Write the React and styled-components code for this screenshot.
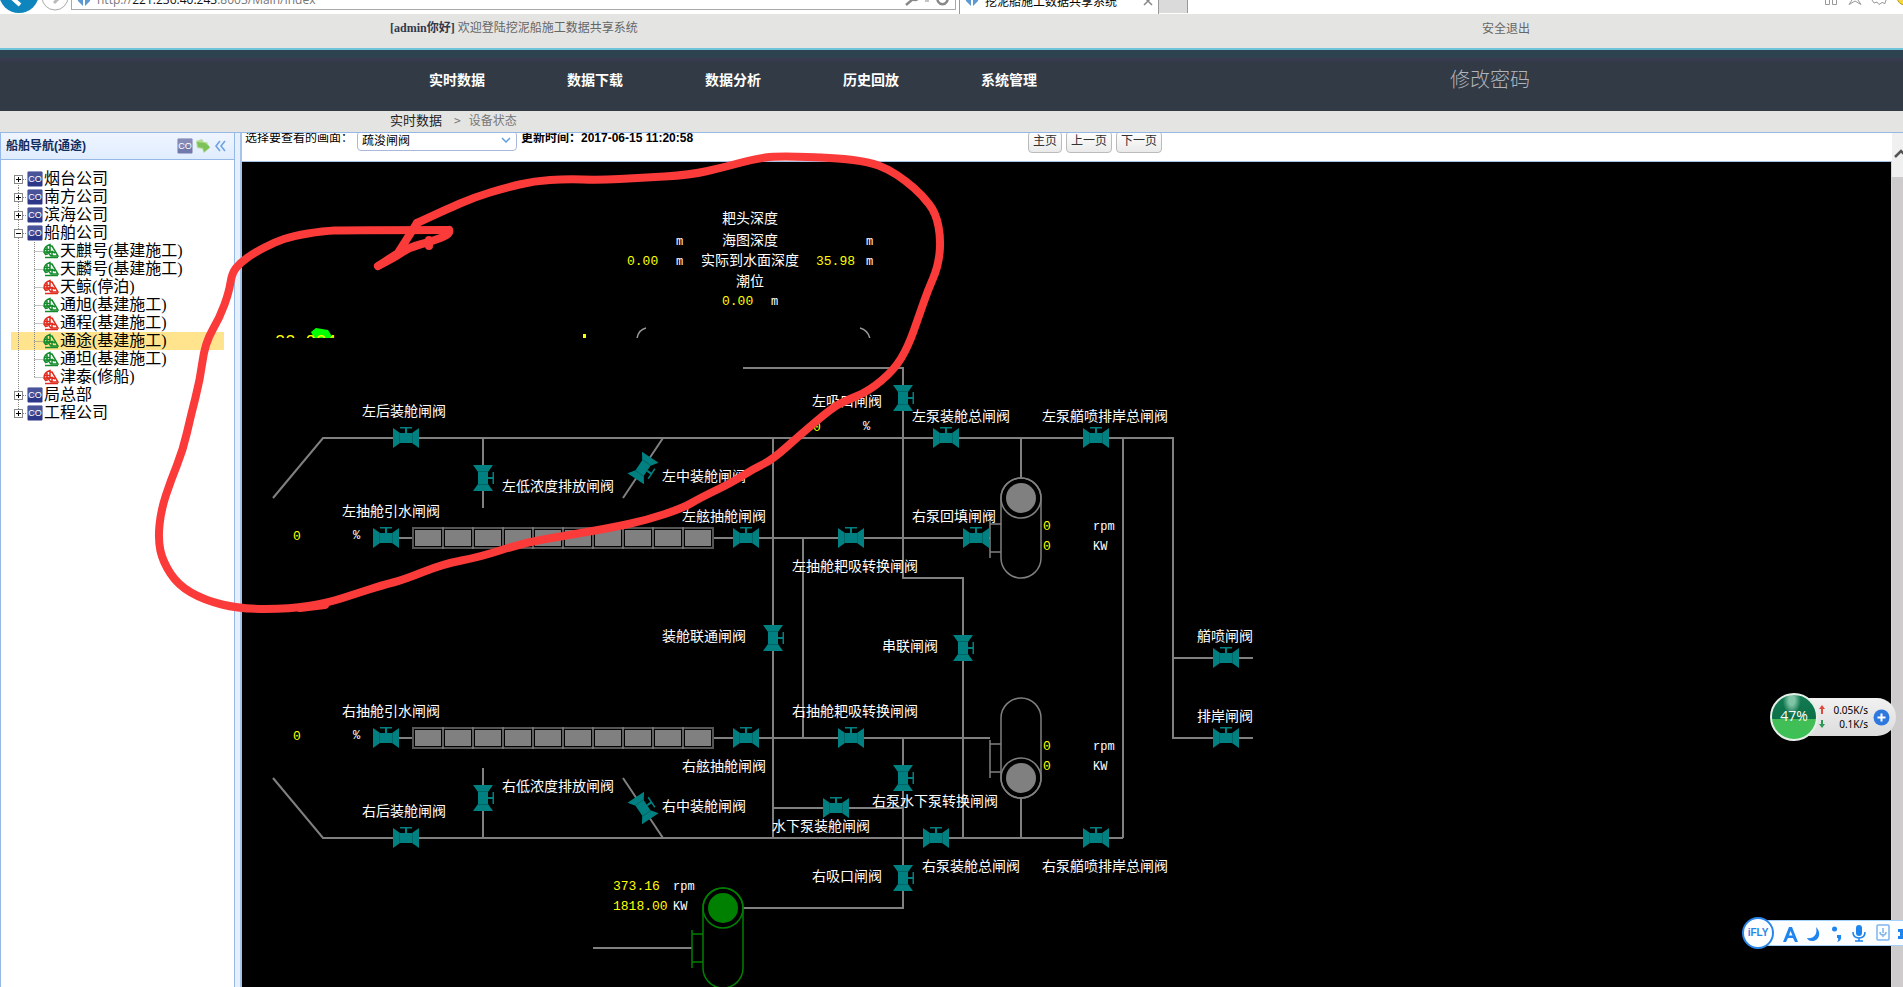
import React from "react";
import styled, { createGlobalStyle } from "styled-components";

const cjk = '"Noto Sans CJK SC", sans-serif';
const LINE = "#808080";

const GlobalStyle = createGlobalStyle`
  * { box-sizing: border-box; }
  html, body, #root { height: 100%; }
  body { margin: 0; background: #fff; overflow: hidden; font: 12px/16px "Liberation Sans", ${cjk}; color: #000; }
  a { color: inherit; text-decoration: none; }
  button, select { font: inherit; color: inherit; }
  ul { list-style: none; margin: 0; padding: 0; }
  svg { display: block; }
`;

const Page = styled.div`
  position: relative;
  height: 100vh;
  display: flex;
  flex-direction: column;
  overflow: hidden;
`;

/* ---------- browser strip ---------- */
const BrowserStrip = styled.div`
  flex: none;
  height: 14px;
  overflow: hidden;
  display: flex;
  align-items: flex-end;
  background: #fff;
`;
const StripIcon = styled.svg`
  flex: none;
`;
const Address = styled.div`
  flex: none;
  width: 46.5%;
  height: 30px;
  margin-bottom: 4px;
  border: 1px solid #a8a8a8;
  display: flex;
  align-items: flex-end;
  gap: 6px;
  padding: 0 2px 0 5px;
  font: 12px/18px "Open Sans", sans-serif;
  color: #777;
  b { font-weight: 400; color: #111; }
  span { flex: 1; }
`;
const Tab = styled.div`
  flex: none;
  width: 200px;
  height: 30px;
  margin-left: 3px;
  border-left: 1px solid #999;
  border-right: 1px solid #999;
  display: flex;
  align-items: flex-end;
  gap: 6px;
  padding: 0 4px 5px 5px;
  font-family: ${cjk};
  span { flex: 1; }
`;
const NewTab = styled.div`
  width: 29px;
  height: 30px;
  margin-bottom: 1px;
  background: #dadada;
  border-right: 1px solid #999;
`;
const StripTools = styled.div`
  margin-left: auto;
`;

/* ---------- site header ---------- */
const Band = styled.div`
  flex: none;
  padding-left: 17px;
  background: #e4e4e2;
`;
const Inner = styled.div`
  max-width: 1140px;
  height: ${(p) => p.$h}px;
  padding-bottom: ${(p) => p.$lift}px;
  margin: 0 auto;
  display: flex;
  align-items: center;
`;
const Welcome = styled.div`
  flex: 1;
  font: 12px/16px "Liberation Serif", ${cjk};
  color: #666;
  b { color: #32384a; }
`;
const QuietLink = styled.a`
  font-family: ${cjk};
  color: #666;
`;
const NavBand = styled(Band)`
  background: linear-gradient(#2e4350 0 7px, #3a3a50 9px, #323a46 13px);
  border-top: 2px solid #6fc4da;
  margin-top: -1px;
`;
const Nav = styled.nav`
  flex: 1;
  display: flex;
  padding-left: 39px;
`;
const NavLink = styled.a`
  width: 138px;
  font: 700 14px/20px ${cjk};
  color: #fff;
`;
const PasswordLink = styled.a`
  font: 300 20px/28px ${cjk};
  color: #b0b4bb;
`;
const Crumbs = styled.nav`
  display: flex;
  gap: 12px;
  font-family: ${cjk};
  color: #777;
  a { font-size: 13px; color: #222; }
  span { display: flex; gap: 8px; }
`;

/* ---------- body layout ---------- */
const Body = styled.div`
  flex: 1;
  min-height: 0;
  display: flex;
  border-top: 1px solid #95b8e7;
`;
const Sidebar = styled.aside`
  flex: none;
  width: 235px;
  border: solid #95b8e7;
  border-width: 0 1px;
`;
const SideHeader = styled.header`
  height: 27px;
  display: flex;
  align-items: center;
  gap: 2px;
  padding: 0 5px;
  background: linear-gradient(#eff5ff, #e0ecff);
  border-bottom: 1px solid #95b8e7;
  h2 { flex: 1; margin: 0; font: 700 12px/16px "Liberation Sans", ${cjk}; color: #0e2d5f; }
`;
const ToolButton = styled.button`
  width: 16px;
  height: 16px;
  padding: 0;
  border: 0;
  background: none;
`;
const Tree = styled.div`
  padding: 10px;
`;
const TreeRow = styled.a`
  height: 18px;
  display: flex;
  align-items: center;
  background: ${(p) => (p.$on ? "#ffe48d" : "none")};
  font: 16px/18px "Liberation Serif", ${cjk};
  color: #000;
  white-space: nowrap;
  svg { flex: none; }
  span { padding-left: 1px; }
`;
const Splitter = styled.div`
  flex: none;
  width: 5px;
  background: #e6effc;
`;
const Main = styled.main`
  flex: 1;
  min-width: 0;
  display: flex;
  flex-direction: column;
  border-left: 2px solid #a9c2e8;
`;
const Toolbar = styled.div`
  flex: none;
  height: 28px;
  overflow: hidden;
  display: flex;
  align-items: flex-start;
  padding-left: 3px;
  label, time, select, button { margin-top: -2px; }
  label { line-height: 14px; width: 112px; }
  time { font-weight: 700; line-height: 14px; margin-left: 4px; width: 507px; white-space: nowrap; }
`;
const Picker = styled.span`
  position: relative;
  display: flex;
  select {
    appearance: none;
    width: 160px;
    height: 20px;
    padding: 0 20px 0 4px;
    border: 1px solid #a9b8dc;
    border-radius: 4px;
    background: #fff;
  }
  svg { position: absolute; right: 6px; top: 3px; }
`;
const PageButton = styled.button`
  height: 22px;
  padding: 0 4px 2px;
  margin-right: 4px;
  line-height: 16px;
  border: 1px solid #bbb;
  border-radius: 4px;
  background: linear-gradient(#fff, #eaeaea);
  color: #333;
`;
const Canvas = styled.div`
  flex: 1;
  min-height: 0;
  overflow: hidden;
  background: #000;
  border-top: 1px solid #a9c2e8;
  border-right: 1px solid #c6d8f5;
`;
const Scrollbar = styled.div`
  flex: none;
  width: 11px;
  background: #cdcbcc;
  svg { background: #f0f0f1; }
`;
const Label = styled.text`
  font: 14px ${cjk};
  fill: #fff;
`;
const Reading = styled.text`
  font: 13px "Liberation Mono", monospace;
  fill: #ff0;
`;
const Unit = styled.text`
  font: 12px "Liberation Mono", monospace;
  fill: #fff;
`;

/* ---------- floating pieces ---------- */
const Markup = styled.svg`
  position: absolute;
  left: 0;
  top: 0;
  pointer-events: none;
`;
const NetMonitor = styled.div`
  position: absolute;
  right: 7px;
  bottom: 246px;
  display: flex;
  align-items: center;
`;
const Percent = styled.div`
  position: relative;
  z-index: 1;
  width: 48px;
  height: 48px;
  margin-right: -24px;
  border: 2px solid #e4f0e8;
  border-radius: 50%;
  background: radial-gradient(ellipse at 45% 12%, #7fc4a5 0 3px, transparent 9px), linear-gradient(#117a52 0, #0d7048 54%, #43bd57 54%, #3cc155);
  font: 14px/42px "Open Sans", sans-serif;
  color: #fff;
  text-align: center;
`;
const Speeds = styled.div`
  width: 102px;
  height: 38px;
  display: grid;
  grid-template-columns: 10px 36px 17px;
  grid-auto-rows: 14px;
  align-content: center;
  align-items: center;
  justify-content: end;
  column-gap: 5px;
  padding-right: 6px;
  border-radius: 0 19px 19px 0;
  background: linear-gradient(#f1f1f1, #dcdcdc);
  font: 10px/14px "Noto Sans", sans-serif;
  text-align: right;
  white-space: nowrap;
  span { justify-self: end; }
  button { grid-column: 3; grid-row: 1 / 3; width: 17px; height: 17px; padding: 0; border: 0; background: none; }
`;
const InputBar = styled.div`
  position: absolute;
  right: 0;
  bottom: 41px;
  width: 146px;
  height: 26px;
  display: flex;
  align-items: center;
  background: #fdfeff;
  border: solid #a5d2f8;
  border-width: 1px 0;
  svg { flex: none; margin-left: -15px; }
`;

const CoIcon = ({ faded }) => (
  <svg width="16" height="16" viewBox="0 0 16 16">
    <rect x="0.5" y="0.5" width="15" height="15" rx="1" fill={faded ? "#7278ab" : "#2c3789"} />
    <path d="M1 1h14v6L1 11z" fill="#fff" opacity="0.14" />
    <text x="8" y="11" fontSize="9" fontFamily="Liberation Sans, sans-serif" fill="#fff" textAnchor="middle">CO</text>
  </svg>
);

const ShipIcon = ({ color }) => (
  <svg width="16" height="16" viewBox="0 0 16 16" fill="none" stroke={color} strokeWidth="1.5">
    <path d="M1 9C1 5 3 2.500 7 1.500V9zM1 6.500h6M4 3v9M1 9l2 3" />
    <path d="M7 3l2 0 6 10H8L5 9.500l4-1v4M9 8.500l3 1.500" />
    <path d="M2 14.500h13" strokeWidth="1.500" />
  </svg>
);

const Branch = ({ kind, first, last }) => (
  <svg width="16" height="18" viewBox="0 0 16 18" fill="none">
    {kind === "elbow" && <path d={`M7.5 0v${last ? 9 : 18}M7.5 9.500H16`} stroke="#888" strokeDasharray="1 1" />}
    {kind === "pipe" && <path d="M7.500 0v18" stroke="#888" strokeDasharray="1 1" />}
    {(kind === "plus" || kind === "minus") && (
      <>
        <path d={`M7.5 ${first ? 9 : 0}V${last ? 9 : 18}M12 9.500h4`} stroke="#888" strokeDasharray="1 1" />
        <rect x="3.500" y="5.500" width="8" height="8" fill="#fff" stroke="#888" />
        <path d={kind === "plus" ? "M5 9.500h5M7.500 7v5" : "M5 9.500h5"} stroke="#000" />
      </>
    )}
  </svg>
);

const Favicon = () => (
  <svg width="14" height="20" viewBox="0 0 14 20" fill="#3f86c9">
    <path d="M6 4v13L1 12C0 9 2 6 6 4zM8 4v13l5-5c1-3-1-6-5-8z" opacity="0.850" />
  </svg>
);

const companies = [
  { name: "烟台公司" },
  { name: "南方公司" },
  { name: "滨海公司" },
  {
    name: "船舶公司",
    ships: [
      ["天麒号(基建施工)", true],
      ["天麟号(基建施工)", true],
      ["天鲸(停泊)", false],
      ["通旭(基建施工)", true],
      ["通程(基建施工)", false],
      ["通途(基建施工)", true],
      ["通坦(基建施工)", true],
      ["津泰(修船)", false],
    ],
  },
  { name: "局总部" },
  { name: "工程公司" },
];

const ShipTree = () => (
  <Tree>
    <ul>
      {companies.map((c, i) => (
        <li key={c.name}>
          <TreeRow href="#">
            <Branch kind={c.ships ? "minus" : "plus"} first={i === 0} last={i === companies.length - 1} />
            <CoIcon />
            <span>{c.name}</span>
          </TreeRow>
          {c.ships && (
            <ul>
              {c.ships.map(([name, working], j) => (
                <li key={name}>
                  <TreeRow href="#" $on={name.startsWith("通途")}>
                    <Branch kind="pipe" />
                    <Branch kind="elbow" last={j === c.ships.length - 1} />
                    <ShipIcon color={working ? "#138a2b" : "#e02a1c"} />
                    <span>{name}</span>
                  </TreeRow>
                </li>
              ))}
            </ul>
          )}
        </li>
      ))}
    </ul>
  </Tree>
);

/* ---------- piping diagram ---------- */
const pipes = [
  "M31 336L81 276H931V576H1011", "M931 496H1011",
  "M241 276V346", "M421 276L381 336", "M531 276V676",
  "M501 206H661V416H721V676", "M471 376H748", "M561 376V576",
  "M779 276V316", "M881 276V676", "M471 576H748",
  "M661 576V746H501", "M531 646H661",
  "M31 616L81 676H881", "M241 606V676", "M381 616L421 676",
  "M779 636V676", "M351 786H450", "M155 376H171", "M155 576H171",
];

const valves = [
  [164, 276], [144, 376], [504, 376], [609, 376], [734, 376], [704, 276], [854, 276],
  [144, 576], [504, 576], [609, 576], [594, 646], [694, 676], [854, 676], [164, 676],
  [984, 496], [984, 576],
  [241, 316, 90], [661, 236, 90], [241, 636, 90], [531, 476, 90], [721, 486, 90],
  [661, 616, 90], [661, 716, 90], [401, 306, 124], [401, 646, 56],
];

const Valve = ({ x, y, turn = 0 }) => (
  <g transform={`translate(${x} ${y}) rotate(${turn})`} fill="#008080">
    <path d="M-13-10L-6-5H6L13-10V10L6 5H-6L-13 10z" />
    <path d="M-6-11H6V-9.500H1V-5H-1V-9.500H-6z" />
    <path d="M-6.500-5V5M6.500-5V5" stroke="#005c5c" strokeWidth="0.700" />
  </g>
);

const Tank = ({ y }) => (
  <g>
    <rect x="171" y={y} width="300" height="20" fill="#000" stroke="#555" strokeWidth="2" />
    {Array.from({ length: 10 }, (_, i) => (
      <g key={i}>
        <rect x={173 + i * 30} y={y + 2} width="26" height="16" fill={LINE} />
        {i > 0 && <path d={`M${171 + i * 30} ${y - 1}v22`} stroke={LINE} strokeWidth="1.500" />}
      </g>
    ))}
  </g>
);

const Pump = ({ x, top, head, color = LINE }) => (
  <g fill="none" stroke={color} strokeWidth="1.500">
    <rect x={x - 20} y={top} width="40" height="100" rx="20" />
    <circle cx={x} cy={head} r="20" />
    <circle cx={x} cy={head} r="15" fill={color} stroke="none" />
    <path d={`M${x - 31} ${top + 42}v38M${x - 31} ${top + 46}h11M${x - 31} ${top + 74}h11`} />
  </g>
);

const labels = [
  [480, 61, "耙头深度"], [480, 83, "海图深度"], [459, 103, "实际到水面深度"], [494, 124, "潮位"],
  [120, 254, "左后装舱闸阀"], [260, 329, "左低浓度排放闸阀"], [420, 319, "左中装舱闸阀"],
  [100, 354, "左抽舱引水闸阀"], [440, 359, "左舷抽舱闸阀"], [570, 244, "左吸口闸阀"],
  [670, 259, "左泵装舱总闸阀"], [800, 259, "左泵艏喷排岸总闸阀"], [670, 359, "右泵回填闸阀"],
  [550, 409, "左抽舱耙吸转换闸阀"], [420, 479, "装舱联通闸阀"], [640, 489, "串联闸阀"],
  [955, 479, "艏喷闸阀"], [955, 559, "排岸闸阀"], [100, 554, "右抽舱引水闸阀"],
  [550, 554, "右抽舱耙吸转换闸阀"], [260, 629, "右低浓度排放闸阀"], [120, 654, "右后装舱闸阀"],
  [420, 649, "右中装舱闸阀"], [440, 609, "右舷抽舱闸阀"], [630, 644, "右泵水下泵转换闸阀"],
  [530, 669, "水下泵装舱闸阀"], [680, 709, "右泵装舱总闸阀"], [800, 709, "右泵艏喷排岸总闸阀"],
  [570, 719, "右吸口闸阀"],
];
const readings = [
  [385, 103, "0.00"], [574, 103, "35.98"], [480, 143, "0.00"], [51, 378, "0"], [51, 578, "0"],
  [571, 269, "0"], [801, 368, "0"], [801, 388, "0"], [801, 588, "0"], [801, 608, "0"],
  [371, 728, "373.16"], [371, 748, "1818.00"],
];
const units = [
  [434, 83, "m"], [434, 103, "m"], [624, 83, "m"], [624, 103, "m"], [529, 143, "m"],
  [111, 377, "%"], [111, 577, "%"], [621, 268, "%"],
  [851, 368, "rpm"], [851, 388, "KW"], [851, 588, "rpm"], [851, 608, "KW"],
  [431, 728, "rpm"], [431, 748, "KW"],
];

const Diagram = () => (
  <svg width="100%" height="100%" role="img" aria-label="疏浚闸阀">
    <clipPath id="gauge-clip">
      <rect x="0" y="160" width="660" height="16" />
    </clipPath>
    <path d={pipes.join("")} fill="none" stroke={LINE} strokeWidth="2" />
    <g clipPath="url(#gauge-clip)">
      <path d="M69 170l5-4 12 2 5 8H72z" fill="#0f0" />
      <text x="33" y="184" fontSize="17" fontFamily="Liberation Mono, monospace" fill="#ff0">22.024</text>
      <rect x="341" y="172" width="3" height="4" fill="#ff0" />
      <path d="M395 177Q396 168 404 166M618 166Q626 168 628 177" fill="none" stroke="#999" strokeWidth="1.500" />
    </g>
    <Tank y={366} />
    <Tank y={566} />
    <Pump x={779} top={316} head={336} />
    <Pump x={779} top={536} head={616} />
    <Pump x={481} top={726} head={746} color="#008000" />
    {valves.map(([x, y, turn]) => <Valve key={`${x}-${y}`} x={x} y={y} turn={turn} />)}
    {labels.map(([x, y, t]) => <Label key={t} x={x} y={y}>{t}</Label>)}
    {readings.map(([x, y, t]) => <Reading key={`${x}-${y}`} x={x} y={y}>{t}</Reading>)}
    {units.map(([x, y, t]) => <Unit key={`${x}-${y}`} x={x} y={y}>{t}</Unit>)}
  </svg>
);

/* ---------- freehand marker ---------- */
const loop = [
  [378, 223], [413, 206], [440, 193], [480, 184], [534, 181], [566, 179], [600, 180], [639, 178], [690, 175], [725, 167],
  [754, 159], [777, 156], [837, 158], [869, 162], [888, 169], [906, 181], [922, 195], [936, 213], [941, 240],
  [938, 267], [928, 290], [920, 313], [908, 347], [894, 370], [869, 391], [845, 401], [832, 408], [800, 435],
  [772, 460], [753, 469], [733, 482], [700, 498], [683, 508], [647, 520], [610, 528], [563, 536], [523, 543],
  [480, 557], [443, 564], [403, 580], [383, 585], [355, 594], [327, 603], [290, 609], [240, 609], [204, 600],
  [178, 585], [163, 562], [158, 540], [161, 510], [171, 480], [183, 450], [191, 415], [200, 380], [205, 343],
  [220, 317], [229, 292], [232, 273], [240, 263], [254, 253], [275, 242], [293, 236], [323, 231], [346, 230],
  [449, 230],
];
const arrowHead = [[449, 230], [451, 234], [430, 242], [410, 247], [394, 258], [378, 266]];

const smooth = (pts) => {
  const mids = pts.slice(1, -1).map(([x, y], i) => {
    const [nx, ny] = pts[i + 2];
    const end = i === pts.length - 3;
    return `Q${x} ${y} ${end ? nx : (x + nx) / 2} ${end ? ny : (y + ny) / 2}`;
  });
  return `M${pts[0].join(" ")}${mids.join("")}`;
};

/* the loop starts over the canvas, a little right of the arrow's tip */
const loopStart = [[417, 223], [445, 210], [475, 197], [505, 188]];

export default function App() {
  return (
    <Page>
      <GlobalStyle />
      <BrowserStrip>
        <StripIcon width="71" height="30" viewBox="0 -16 71 30">
          <circle cx="19" cy="-7" r="20" fill="#0e86bd" />
          <path d="M20 5L10-4" stroke="#fff" strokeWidth="4" />
          <circle cx="55" cy="-3" r="13" fill="none" stroke="#aaa" />
          <path d="M54 3l7-7" stroke="#bbb" strokeWidth="3" />
        </StripIcon>
        <Address>
          <Favicon />
          <span>http://<b>221.236.40.243</b>:8003/Main/Index</span>
          <svg width="50" height="16" viewBox="0 0 50 16" fill="none" stroke="#888" strokeWidth="2.500">
            <path d="M3 12l7-6" />
            <circle cx="12" cy="3" r="4" />
            <path d="M22 8h4" strokeWidth="1" />
            <path d="M35 4a5 5 0 1 0 9 0" />
          </svg>
        </Address>
        <Tab>
          <Favicon />
          <span>挖泥船施工数据共享系统</span>
          <svg width="12" height="12" viewBox="0 0 12 12" stroke="#888" strokeWidth="1.500"><path d="M2 0l8 8M10 0l-8 8" /></svg>
        </Tab>
        <NewTab />
        <StripTools>
          <svg width="80" height="14" viewBox="0 0 80 14" fill="none" stroke="#999">
            <path d="M2.500 0v4.500h4V0M9.500 0v4.500h4V0" />
            <path d="M29 0l-3 4.500 6-3.500 6 3.500L35 0" />
            <path d="M49 0l2 3 3-1 2 2.500 3-2 3 1 1-3.500" />
            <circle cx="82" cy="-3" r="8" fill="#f6d73c" stroke="#b99b18" />
          </svg>
        </StripTools>
      </BrowserStrip>

      <Band>
        <Inner $h={35} $lift={8}>
          <Welcome><b>[admin你好]</b> 欢迎登陆挖泥船施工数据共享系统</Welcome>
          <QuietLink href="#">安全退出</QuietLink>
        </Inner>
      </Band>
      <NavBand>
        <Inner $h={61} $lift={4}>
          <Nav>
            {["实时数据", "数据下载", "数据分析", "历史回放", "系统管理"].map((t) => (
              <NavLink key={t} href="#">{t}</NavLink>
            ))}
          </Nav>
          <PasswordLink href="#">修改密码</PasswordLink>
        </Inner>
      </NavBand>
      <Band>
        <Inner $h={21} $lift={4}>
          <Crumbs>
            <a href="#">实时数据</a>
            <span><span>&gt;</span> 设备状态</span>
          </Crumbs>
        </Inner>
      </Band>

      <Body>
        <Sidebar>
          <SideHeader>
            <h2>船舶导航(通途)</h2>
            <ToolButton aria-label="公司"><CoIcon faded /></ToolButton>
            <ToolButton aria-label="刷新">
              <svg width="16" height="16" viewBox="0 0 16 16">
                <path d="M1 3l6-2 2 3 3 0 3 6-6 5-2-4-5-1z" fill="#b4dc98" />
                <path d="M2 4l8 1 5 4-6 5-1-4-5-1z" fill="#7cc258" />
              </svg>
            </ToolButton>
            <ToolButton aria-label="收起">
              <svg width="16" height="16" viewBox="0 0 16 16" fill="none" stroke="#6fa3e0" strokeWidth="1.600">
                <path d="M7 3L3 8l4 5M12 3L8 8l4 5" />
              </svg>
            </ToolButton>
          </SideHeader>
          <ShipTree />
        </Sidebar>
        <Splitter />
        <Main>
          <Toolbar>
            <label htmlFor="screen">选择要查看的画面：</label>
            <Picker>
              <select id="screen" defaultValue="疏浚闸阀">
                <option>疏浚闸阀</option>
              </select>
              <svg width="10" height="8" viewBox="0 0 10 8" fill="none" stroke="#5f9fdc" strokeWidth="1.500"><path d="M1 2l4 4 4-4" /></svg>
            </Picker>
            <time>更新时间：2017-06-15 11:20:58</time>
            <PageButton>主页</PageButton>
            <PageButton>上一页</PageButton>
            <PageButton>下一页</PageButton>
          </Toolbar>
          <Canvas><Diagram /></Canvas>
        </Main>
        <Scrollbar>
          <svg width="11" height="44" viewBox="0 0 11 44" fill="none" stroke="#555" strokeWidth="2.500"><path d="M3 24l6-6 6 6" /></svg>
        </Scrollbar>
      </Body>

      <Markup width="1000" height="700" fill="none" stroke="#fb3a3a" strokeWidth="8" strokeLinecap="round" strokeLinejoin="round" aria-hidden="true">
        <path d={smooth([...loopStart, ...loop.slice(4)])} />
        <path d={smooth(arrowHead)} />
        <path d="M417 223L398 253 378 266M429 240v6M300 608L325 605" />
      </Markup>

      <NetMonitor>
        <Percent>47%</Percent>
        <Speeds>
          <svg width="10" height="10" viewBox="0 0 10 10" fill="#e2483c"><path d="M5 0l3 4H6v5H4V4H2z" /></svg>
          <span>0.05K/s</span>
          <svg width="10" height="10" viewBox="0 0 10 10" fill="#2a9a55"><path d="M5 9L2 5h2V1h2v4h2z" /></svg>
          <span>0.1K/s</span>
          <button aria-label="加速">
            <svg width="17" height="17" viewBox="0 0 17 17">
              <circle cx="8.500" cy="8.500" r="8" fill="#2f78dd" />
              <path d="M8.500 4.500v8M4.500 8.500h8" stroke="#fff" strokeWidth="2" />
            </svg>
          </button>
        </Speeds>
      </NetMonitor>

      <InputBar>
        <svg width="162" height="34" viewBox="-16 -17 162 34" overflow="visible">
          <circle cx="0" cy="0" r="15" fill="#fff" stroke="#2a86ea" strokeWidth="2" />
          <text x="0" y="3" textAnchor="middle" fontFamily="Liberation Sans, sans-serif" fontWeight="700" fontSize="10" fill="#2a86ea">iFLY</text>
          <g fill="#1f85ee">
            <path d="M25 9L31-6h3L40 9H37L35 5H30L28 9zM31 2.500h3.500L32.500-2z" fillRule="evenodd" />
            <path d="M58-6C64 0 61 8 54 8 51 8 50 7 49 5 55 6 60 2 58-6z" />
            <circle cx="76.500" cy="-4" r="2.500" />
            <path d="M79 2h4q1 6-4 7 2-2 1-4h-1z" />
            <rect x="98" y="-8" width="6" height="11" rx="3" />
            <path d="M95-1q0 6 6 6t6-6M101 5v3M97 8h8" fill="none" stroke="#1f85ee" strokeWidth="1.600" />
            <path d="M140-4h8v10h-8v-3h2v-4h-2z" />
          </g>
          <g fill="none" stroke="#7db4ee" strokeWidth="1.500">
            <rect x="119" y="-8" width="12" height="15" rx="1" />
            <path d="M125-5v5M122-1q0 3 3 3t3-3M125 2v2" />
          </g>
        </svg>
      </InputBar>
    </Page>
  );
}
